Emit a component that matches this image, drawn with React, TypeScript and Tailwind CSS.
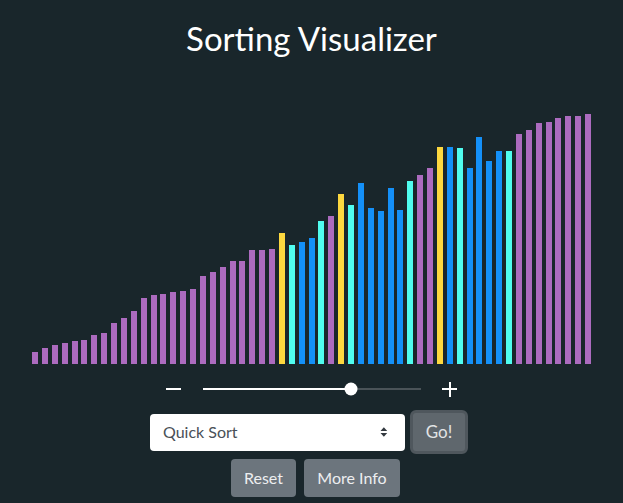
import { useState } from "react";

type BarState = "idle" | "pivot" | "compare" | "active";

const heights = [
  12, 16, 19, 21, 23, 24, 29, 31, 41, 46, 53, 66, 69, 70, 72, 73, 75, 88, 92, 97,
  103, 103, 114, 114, 115, 131, 119, 122, 126, 143, 148, 170, 159, 181, 156, 153,
  176, 154, 183, 189, 196, 217, 217, 216, 196, 227, 203, 213, 213, 230, 234, 241,
  242, 246, 248, 248, 250,
];

// colour of each bar in the current step of the sort
const states: BarState[] = heights.map((_, i) => {
  if (i === 25 || i === 31 || i === 41) return "pivot";
  if ([26, 29, 32, 38, 43, 48].includes(i)) return "compare";
  if ([27, 28, 33, 34, 35, 36, 37, 42, 44, 45, 46, 47].includes(i)) return "active";
  return "idle";
});

const barColor: Record<BarState, string> = {
  idle: "bg-[#ac6bbf]",
  pivot: "bg-[#fdd83f]",
  compare: "bg-[#50fcef]",
  active: "bg-[#1490f8]",
};

function SortArrows() {
  return (
    <svg viewBox="0 0 8 10" className="h-[10px] w-[8px]" aria-hidden="true">
      <path fill="#343a40" d="M4 0 L7.5 4 H0.5 Z M0.5 6 H7.5 L4 10 Z" />
    </svg>
  );
}

function App() {
  const [algorithm, setAlgorithm] = useState("Quick Sort");
  const [size] = useState(68);

  return (
    <div className="flex min-h-screen flex-col items-center bg-[#19262b] font-['Lato','Liberation_Sans',sans-serif]">
      <h1 className="mt-[17px] text-[33px] leading-[42px] text-white">Sorting Visualizer</h1>

      <div className="mt-[55px] flex h-[250px] w-[559px] items-end justify-between">
        {heights.map((h, i) => (
          <div key={i} className={`w-[6px] ${barColor[states[i]]}`} style={{ height: h }} />
        ))}
      </div>

      <div className="mt-[17px] flex h-[16px] items-center">
        <div className="h-[2px] w-[15px] bg-white" />
        <div className="relative ml-[22px] h-[2px] w-[218px] bg-[#4a5358]">
          <div className="h-full bg-white" style={{ width: `${size}%` }} />
          <div
            className="absolute top-1/2 h-[13px] w-[13px] -translate-x-1/2 -translate-y-1/2 rounded-full bg-white"
            style={{ left: `${size}%` }}
          />
        </div>
        <div className="relative ml-[21px] h-[15px] w-[15px]">
          <div className="absolute left-0 top-[6.5px] h-[2px] w-[15px] bg-white" />
          <div className="absolute left-[6.5px] top-0 h-[15px] w-[2px] bg-white" />
        </div>
      </div>

      <div className="mt-[13px] flex items-center gap-[5px] pr-[5px]">
        <label className="flex h-[37px] w-[255px] items-center justify-between rounded-[4px] bg-white pl-[13px] pr-[17px] text-[16px] text-[#495057]">
          <select
            value={algorithm}
            onChange={(e) => setAlgorithm(e.target.value)}
            className="w-full appearance-none bg-transparent outline-none"
          >
            <option>Quick Sort</option>
            <option>Merge Sort</option>
            <option>Heap Sort</option>
            <option>Bubble Sort</option>
          </select>
          <SortArrows />
        </label>
        <button
          type="button"
          className="h-[44px] w-[58px] rounded-[6px] border-[3px] border-[#4f575d] bg-[#5f676d] text-[17px] text-[#e2e4e6]"
        >
          Go!
        </button>
      </div>

      <div className="mt-[5px] flex gap-[8px] pl-[8px]">
        <button
          type="button"
          className="h-[38px] w-[65px] rounded-[4px] bg-[#6c757d] text-[16px] text-[#eceef0]"
        >
          Reset
        </button>
        <button
          type="button"
          className="h-[38px] w-[96px] rounded-[4px] bg-[#6c757d] text-[16px] text-[#eceef0]"
        >
          More Info
        </button>
      </div>
    </div>
  );
}

export default App;
